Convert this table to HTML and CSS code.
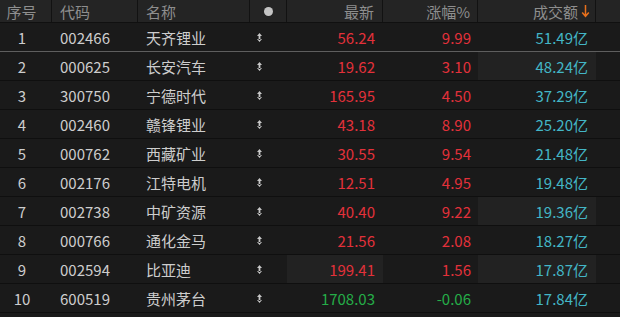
FILE: index.html
```html
<!DOCTYPE html>
<html lang="zh-CN">
<head>
<meta charset="utf-8">
<title>成交额排行</title>
<link rel="stylesheet" href="styles.css">
</head>
<body>
<div class="table">
  <div class="row head">
    <div class="c c-idx">序号</div>
    <div class="c c-code">代码</div>
    <div class="c c-name">名称</div>
    <div class="c c-dot"><span class="dot"></span></div>
    <div class="c c-num">最新</div>
    <div class="c c-num">涨幅%</div>
    <div class="c c-num">成交额<svg class="sort" width="9" height="14" viewBox="0 0 9 14"><path d="M4.5 1 V12 M1.2 8.6 L4.5 12.3 L7.8 8.6" fill="none" stroke="#e8701c" stroke-width="1.5"/></svg></div>
    <div class="c c-end"></div>
  </div>

  <div class="row first">
    <div class="c c-idx">1</div><div class="c c-code">002466</div><div class="c c-name">天齐锂业</div>
    <div class="c c-dot"><svg class="ud" width="5" height="9" viewBox="0 0 5 9"><path d="M2.5 0 L5 3 H0 Z M2.5 9 L5 6 H0 Z M1.6 2 H3.4 V7 H1.6 Z" fill="#c8c8c8"/></svg></div>
    <div class="c c-num up">56.24</div><div class="c c-num up">9.99</div><div class="c c-num amt">51.49亿</div><div class="c c-end"></div>
  </div>
  <div class="row">
    <div class="c c-idx">2</div><div class="c c-code">000625</div><div class="c c-name">长安汽车</div>
    <div class="c c-dot"><svg class="ud" width="5" height="9" viewBox="0 0 5 9"><path d="M2.5 0 L5 3 H0 Z M2.5 9 L5 6 H0 Z M1.6 2 H3.4 V7 H1.6 Z" fill="#c8c8c8"/></svg></div>
    <div class="c c-num up">19.62</div><div class="c c-num up">3.10</div><div class="c c-num amt hl">48.24亿</div><div class="c c-end"></div>
  </div>
  <div class="row">
    <div class="c c-idx">3</div><div class="c c-code">300750</div><div class="c c-name">宁德时代</div>
    <div class="c c-dot"><svg class="ud" width="5" height="9" viewBox="0 0 5 9"><path d="M2.5 0 L5 3 H0 Z M2.5 9 L5 6 H0 Z M1.6 2 H3.4 V7 H1.6 Z" fill="#c8c8c8"/></svg></div>
    <div class="c c-num up">165.95</div><div class="c c-num up">4.50</div><div class="c c-num amt">37.29亿</div><div class="c c-end"></div>
  </div>
  <div class="row">
    <div class="c c-idx">4</div><div class="c c-code">002460</div><div class="c c-name">赣锋锂业</div>
    <div class="c c-dot"><svg class="ud" width="5" height="9" viewBox="0 0 5 9"><path d="M2.5 0 L5 3 H0 Z M2.5 9 L5 6 H0 Z M1.6 2 H3.4 V7 H1.6 Z" fill="#c8c8c8"/></svg></div>
    <div class="c c-num up">43.18</div><div class="c c-num up">8.90</div><div class="c c-num amt">25.20亿</div><div class="c c-end"></div>
  </div>
  <div class="row">
    <div class="c c-idx">5</div><div class="c c-code">000762</div><div class="c c-name">西藏矿业</div>
    <div class="c c-dot"><svg class="ud" width="5" height="9" viewBox="0 0 5 9"><path d="M2.5 0 L5 3 H0 Z M2.5 9 L5 6 H0 Z M1.6 2 H3.4 V7 H1.6 Z" fill="#c8c8c8"/></svg></div>
    <div class="c c-num up">30.55</div><div class="c c-num up">9.54</div><div class="c c-num amt">21.48亿</div><div class="c c-end"></div>
  </div>
  <div class="row">
    <div class="c c-idx">6</div><div class="c c-code">002176</div><div class="c c-name">江特电机</div>
    <div class="c c-dot"><svg class="ud" width="5" height="9" viewBox="0 0 5 9"><path d="M2.5 0 L5 3 H0 Z M2.5 9 L5 6 H0 Z M1.6 2 H3.4 V7 H1.6 Z" fill="#c8c8c8"/></svg></div>
    <div class="c c-num up">12.51</div><div class="c c-num up">4.95</div><div class="c c-num amt">19.48亿</div><div class="c c-end"></div>
  </div>
  <div class="row">
    <div class="c c-idx">7</div><div class="c c-code">002738</div><div class="c c-name">中矿资源</div>
    <div class="c c-dot"><svg class="ud" width="5" height="9" viewBox="0 0 5 9"><path d="M2.5 0 L5 3 H0 Z M2.5 9 L5 6 H0 Z M1.6 2 H3.4 V7 H1.6 Z" fill="#c8c8c8"/></svg></div>
    <div class="c c-num up">40.40</div><div class="c c-num up">9.22</div><div class="c c-num amt hl">19.36亿</div><div class="c c-end"></div>
  </div>
  <div class="row">
    <div class="c c-idx">8</div><div class="c c-code">000766</div><div class="c c-name">通化金马</div>
    <div class="c c-dot"><svg class="ud" width="5" height="9" viewBox="0 0 5 9"><path d="M2.5 0 L5 3 H0 Z M2.5 9 L5 6 H0 Z M1.6 2 H3.4 V7 H1.6 Z" fill="#c8c8c8"/></svg></div>
    <div class="c c-num up">21.56</div><div class="c c-num up">2.08</div><div class="c c-num amt">18.27亿</div><div class="c c-end"></div>
  </div>
  <div class="row">
    <div class="c c-idx">9</div><div class="c c-code">002594</div><div class="c c-name">比亚迪</div>
    <div class="c c-dot"><svg class="ud" width="5" height="9" viewBox="0 0 5 9"><path d="M2.5 0 L5 3 H0 Z M2.5 9 L5 6 H0 Z M1.6 2 H3.4 V7 H1.6 Z" fill="#c8c8c8"/></svg></div>
    <div class="c c-num up hl">199.41</div><div class="c c-num up">1.56</div><div class="c c-num amt hl">17.87亿</div><div class="c c-end"></div>
  </div>
  <div class="row">
    <div class="c c-idx">10</div><div class="c c-code">600519</div><div class="c c-name">贵州茅台</div>
    <div class="c c-dot"><svg class="ud" width="5" height="9" viewBox="0 0 5 9"><path d="M2.5 0 L5 3 H0 Z M2.5 9 L5 6 H0 Z M1.6 2 H3.4 V7 H1.6 Z" fill="#c8c8c8"/></svg></div>
    <div class="c c-num down">1708.03</div><div class="c c-num down">-0.06</div><div class="c c-num amt">17.84亿</div><div class="c c-end"></div>
  </div>
</div>
</body>
</html>
```

FILE: styles.css
```css
html, body {
  margin: 0;
  padding: 0;
  background: #1a1a1a;
}
body {
  width: 620px;
  height: 317px;
  overflow: hidden;
  font-family: "Noto Sans CJK SC", "Noto Sans", sans-serif;
  font-size: 15px;
  color: #cdcdcd;
}
.table {
  display: flex;
  flex-direction: column;
}
.row {
  display: grid;
  grid-template-columns: 52px 86px 112px 37px 96px 95px 118px 24px;
  height: 28px;
  border-bottom: 1px solid #0f0f0f;
  background: #1a1a1a;
}
.row.first {
  border-bottom-color: #5e5e5e;
}
.row.head {
  height: 22px;
  background: #242424;
  color: #8e8e8e;
  border-bottom: 1px solid #101010;
}
.row.head .c {
  border-right: 1px solid #121212;
}
.row.head .c-end {
  border-right: none;
}
.c {
  display: flex;
  align-items: center;
  white-space: nowrap;
  line-height: 1;
}
.c-idx {
  justify-content: center;
  padding-right: 8px;
}
.c-code, .c-name {
  padding-left: 8px;
}
.c-dot {
  padding-left: 7px;
}
.row.head .c-dot {
  justify-content: center;
  padding-left: 0;
}
.dot {
  width: 9px;
  height: 9px;
  border-radius: 50%;
  background: #c4c4c4;
  margin-left: 1px;
}
.ud {
  display: block;
}
.c-num {
  justify-content: flex-end;
  padding-right: 8px;
}
.row .c-num:nth-child(6) {
  padding-right: 7px;
}
.sort {
  margin-left: 3px;
  margin-right: -3px;
}
.up { color: #e3313a; }
.down { color: #25ad48; }
.amt { color: #43b6c6; }
.hl { background: #222222; }
```
